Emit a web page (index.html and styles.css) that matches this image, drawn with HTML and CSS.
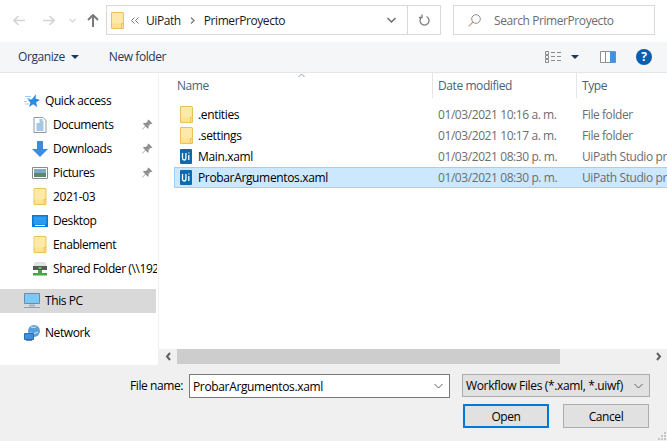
FILE: index.html
```html
<!DOCTYPE html>
<html lang="en">
<head>
    <meta charset="UTF-8">
    <title>Open</title>
    <link rel="stylesheet" href="styles.css">
</head>
<body>
    <svg class="defs" width="0" height="0">
        <symbol id="folder" viewBox="0 0 13 17">
            <path d="M.5.5h11.6l.4.5v15.5H.5z" fill="#fee28f" stroke="#e9c355"/>
            <path d="M1 1h10.6v10.5H1z" fill="#fee9a9"/>
            <path d="M10.5 16.5v-5h2" fill="none" stroke="#e9c355"/>
        </symbol>
        <symbol id="uipath" viewBox="0 0 12 15">
            <path d="M1 0h10a1 1 0 0 1 1 1v13a1 1 0 0 1-1 1H1a1 1 0 0 1-1-1V1a1 1 0 0 1 1-1z" fill="#0a6ab4"/>
            <path d="M2.5 4v5.2q0 1.8 1.7 1.8t1.7-1.8V4M8.8 6v5M8.8 3.6v1" fill="none" stroke="#fff" stroke-width="1.3"/>
        </symbol>
        <symbol id="pin" viewBox="0 0 11 11">
            <path d="M6.5.5l4 4-1.2.6-.8-.2-2 2 .2 2-.9.8-2.3-2.3L.6 10.4l-.4-.4 3-3.1L1 4.700l.8-.9 2 .2 2-2-.2-.8z" fill="#8f9295"/>
        </symbol>
    </svg>

    <div class="dialog">
        <div class="navbar">
            <div class="nav-buttons">
                <svg class="nav-back" width="12" height="11" viewBox="0 0 12 11"><path d="M5.500 1L1 5.500 5.500 10M1 5.500h11" fill="none" stroke="#d4d4d4" stroke-width="1.600"/></svg>
                <svg class="nav-forward" width="12" height="11" viewBox="0 0 12 11"><path d="M6.500 1L11 5.500 6.500 10M11 5.500H0" fill="none" stroke="#d4d4d4" stroke-width="1.600"/></svg>
                <svg class="nav-recent" width="7" height="5" viewBox="0 0 7 5"><path d="M.5 1l3 3 3-3" fill="none" stroke="#d4d4d4" stroke-width="1.200"/></svg>
                <svg class="nav-up" width="12" height="13" viewBox="0 0 12 13"><path d="M1 6l5-5 5 5M6 1v12" fill="none" stroke="#7a7a7a" stroke-width="2"/></svg>
            </div>
            <div class="address">
                <svg class="address-folder" width="13" height="17"><use href="#folder"/></svg>
                <svg class="crumb-more" width="8" height="7" viewBox="0 0 8 7"><path d="M3.500.5l-3 3 3 3M7.500.5l-3 3 3 3" fill="none" stroke="#7d7d7d"/></svg>
                <span class="crumb">UiPath</span>
                <svg class="crumb-sep" width="5" height="7" viewBox="0 0 5 7"><path d="M1 .5l3 3-3 3" fill="none" stroke="#7d7d7d" stroke-width="1.300"/></svg>
                <span class="crumb">PrimerProyecto</span>
                <svg class="address-drop" width="9" height="6" viewBox="0 0 9 6"><path d="M.5 1l4 4 4-4" fill="none" stroke="#6d6d6d" stroke-width="1.500"/></svg>
                <div class="address-refresh">
                    <svg width="11" height="12" viewBox="0 0 11 12"><path d="M3.500 2.500a4.500 4.500 0 1 0 4 0M3 .5v3H0" fill="none" stroke="#7d7d7d" stroke-width="1.300"/></svg>
                </div>
            </div>
            <div class="search">
                <svg width="13" height="13" viewBox="0 0 13 13"><circle cx="8" cy="5" r="4.300" fill="none" stroke="#8d8d8d"/><path d="M5 8L.7 12.300" stroke="#c59a82" stroke-width="1.100"/></svg>
                <span>Search PrimerProyecto</span>
            </div>
        </div>

        <div class="toolbar">
            <span class="tool">Organize</span>
            <span class="caret"></span>
            <span class="tool new-folder">New folder</span>
            <div class="toolbar-right">
                <svg width="17" height="12" viewBox="0 0 17 12"><path d="M.5.500h3v3h-3zM.5 4.500h3v3h-3zM.5 8.500h3v3h-3z" fill="none" stroke="#8b8b8b"/><path d="M6 1.500h4M12 1.500h4M6 5.500h4M12 5.500h4M6 9.500h4M12 9.500h4" stroke="#8b8b8b"/></svg>
                <span class="caret caret-view"></span>
                <svg class="pane-icon" width="16" height="12" viewBox="0 0 16 12"><path d="M.5.500h15v11H.5z" fill="#fff" stroke="#8f8f8f"/><path d="M5.500 1v10" stroke="#8f8f8f"/><path d="M10 1h5.500v10.500H10z" fill="#4191dc"/></svg>
                <span class="help">?</span>
            </div>
        </div>

        <div class="main">
            <nav class="sidebar">
                <div class="side-item side-top">
                    <svg width="16" height="14" viewBox="0 0 16 14"><path d="M12 0l-.4 4.600L16 6l-3.800 2.300.8 5-3.800-3L5 13l1.400-4.600L3.500 5.500 8 5.200z" fill="#2c8be0"/><path d="M1 2.500h6M3 4.500h3M0 7.500h3M1 10h4" stroke="#9dcdf3"/></svg>
                    <span>Quick access</span>
                </div>
                <div class="side-item">
                    <svg width="13" height="16" viewBox="0 0 13 16"><path d="M.5.500h9l3 3v12H.5z" fill="#fff" stroke="#8e9aa5"/><path d="M6 3h3M6 5h4M3 7h7M3 9h7M3 11h7M3 13h7" stroke="#4a8fc7"/></svg>
                    <span>Documents</span>
                    <svg class="pin" width="11" height="11"><use href="#pin"/></svg>
                </div>
                <div class="side-item">
                    <svg width="16" height="16" viewBox="0 0 16 16"><path d="M5 0h6v8h5l-8 8-8-8h5z" fill="#3a8ddd"/></svg>
                    <span>Downloads</span>
                    <svg class="pin" width="11" height="11"><use href="#pin"/></svg>
                </div>
                <div class="side-item">
                    <svg width="16" height="12" viewBox="0 0 16 12"><path d="M.5.500h15v11H.5z" fill="#fff" stroke="#8b8b8b"/><path d="M2 2h12v4H2z" fill="#7fa9cf"/><path d="M2 6h12v4H2z" fill="#5c8a68"/></svg>
                    <span>Pictures</span>
                    <svg class="pin" width="11" height="11"><use href="#pin"/></svg>
                </div>
                <div class="side-item">
                    <svg width="13" height="17"><use href="#folder"/></svg>
                    <span>2021-03</span>
                </div>
                <div class="side-item">
                    <svg width="16" height="12" viewBox="0 0 16 12"><path d="M0 0h16v12H0z" fill="#0a78d7"/><path d="M1.500 1.500h13v8h-13z" fill="#2b9cf0"/><path d="M3 10.500h10" stroke="#fff"/></svg>
                    <span>Desktop</span>
                </div>
                <div class="side-item">
                    <svg width="13" height="17"><use href="#folder"/></svg>
                    <span>Enablement</span>
                </div>
                <div class="side-item">
                    <svg width="16" height="14" viewBox="0 0 16 14"><path d="M3 0h10l2 4H1z" fill="#e2e2e2"/><path d="M1 4h14v4H1z" fill="#5a5a5a"/><path d="M6.500 5h3v2h-3z" fill="#58c858"/><path d="M6 8h4v3h5v2.500H1V11h5z" fill="#46a546"/></svg>
                    <span class="clip">Shared Folder (\\192.168.1.10)</span>
                </div>
                <div class="side-item side-top side-selected">
                    <svg width="16" height="15" viewBox="0 0 16 15"><path d="M.5.500h15v10H.5z" fill="#7cc8f5" stroke="#6b8aa6"/><path d="M5 12.500h6" stroke="#a2b3c2" stroke-width="2"/><path d="M0 14.500h16" stroke="#8aa0b5"/></svg>
                    <span>This PC</span>
                </div>
                <div class="side-item side-top side-network">
                    <svg width="16" height="16" viewBox="0 0 16 16"><circle cx="10" cy="6" r="6" fill="#5d9fd8"/><path d="M7 2q3 1 5 0M6 8q4 2 8-1" stroke="#d6e9f7" fill="none"/><path d="M.5 8.500h9v6h-9z" fill="#3d8fdc" stroke="#2a6fb4"/><path d="M2 15.500h6" stroke="#6b8aa6"/></svg>
                    <span>Network</span>
                </div>
            </nav>

            <div class="content">
                <div class="columns">
                    <div class="col col-name">Name<svg class="sort" width="7" height="5" viewBox="0 0 7 5"><path d="M.5 4L3.500 1l3 3" fill="none" stroke="#8f9aa5"/></svg></div>
                    <div class="col col-date">Date modified</div>
                    <div class="col col-type">Type</div>
                </div>
                <div class="rows">
                    <div class="row">
                        <div class="cell-name"><svg width="13" height="17"><use href="#folder"/></svg><span>.entities</span></div>
                        <div class="cell-date">01/03/2021 10:16 a. m.</div>
                        <div class="cell-type">File folder</div>
                    </div>
                    <div class="row">
                        <div class="cell-name"><svg width="13" height="17"><use href="#folder"/></svg><span>.settings</span></div>
                        <div class="cell-date">01/03/2021 10:17 a. m.</div>
                        <div class="cell-type">File folder</div>
                    </div>
                    <div class="row">
                        <div class="cell-name"><svg class="ui-icon" width="12" height="15"><use href="#uipath"/></svg><span>Main.xaml</span></div>
                        <div class="cell-date">01/03/2021 08:30 p. m.</div>
                        <div class="cell-type">UiPath Studio project file</div>
                    </div>
                    <div class="row row-selected">
                        <div class="cell-name"><svg class="ui-icon" width="12" height="15"><use href="#uipath"/></svg><span>ProbarArgumentos.xaml</span></div>
                        <div class="cell-date">01/03/2021 08:30 p. m.</div>
                        <div class="cell-type">UiPath Studio project file</div>
                    </div>
                </div>
                <div class="hscroll">
                    <svg width="17" height="15" viewBox="0 0 17 15"><path d="M10 4L7 7.500l3 3.500" fill="none" stroke="#606060" stroke-width="2"/></svg>
                    <div class="hscroll-track"><div class="hscroll-thumb"></div></div>
                    <svg width="17" height="15" viewBox="0 0 17 15"><path d="M7 4l3 3.500L7 11" fill="none" stroke="#606060" stroke-width="2"/></svg>
                </div>
            </div>
        </div>

        <div class="footer">
            <div class="file-row">
                <label class="file-label">File name:</label>
                <div class="file-input">
                    <span>ProbarArgumentos.xaml</span>
                    <svg width="9" height="6" viewBox="0 0 9 6"><path d="M.5 1l4 4 4-4" fill="none" stroke="#606060"/></svg>
                </div>
                <div class="file-filter">
                    <span>Workflow Files (*.xaml, *.uiwf)</span>
                    <svg width="9" height="6" viewBox="0 0 9 6"><path d="M.5 1l4 4 4-4" fill="none" stroke="#606060"/></svg>
                </div>
            </div>
            <div class="button-row">
                <button class="btn btn-default">Open</button>
                <button class="btn">Cancel</button>
            </div>
            <svg class="grip" width="8" height="8" viewBox="0 0 8 8"><path d="M6 0h2v2H6zM3 3h2v2H3zM6 3h2v2H6zM0 6h2v2H0zM3 6h2v2H3zM6 6h2v2H6z" fill="#c4c4c4"/></svg>
        </div>
    </div>
</body>
</html>
```

FILE: styles.css
```css
* {
    box-sizing: border-box;
}
html, body {
    margin: 0;
    padding: 0;
    overflow: hidden;
}
body {
    font-family: "Open Sans", "Noto Sans", sans-serif;
    font-size: 12px;
    letter-spacing: -0.42px;
    color: #000;
    background-color: #fff;
}
.defs {
    display: block;
    height: 0;
}
svg {
    flex: none;
    display: block;
}
.dialog {
    width: 667px;
    height: 441px;
    display: flex;
    flex-direction: column;
}

/* top bar */
.navbar {
    height: 42px;
    flex: none;
    display: flex;
    padding-top: 5px;
    padding-bottom: 7px;
}
.nav-buttons {
    width: 106px;
    flex: none;
    display: flex;
    align-items: center;
    padding-left: 13px;
}
.nav-forward {
    margin-left: 18px;
}
.nav-recent {
    margin-left: 14px;
}
.nav-up {
    margin-left: 11px;
}
.address {
    width: 335px;
    flex: none;
    display: flex;
    align-items: center;
    border: 1px solid #d9d9d9;
    padding-left: 4px;
    color: #1a1a1a;
}
.crumb-more {
    margin-left: 7px;
    margin-right: 7px;
}
.crumb-sep {
    margin: 0 9px;
}
.address-drop {
    margin-left: auto;
    margin-right: 11px;
}
.address-refresh {
    width: 33px;
    align-self: stretch;
    display: flex;
    align-items: center;
    justify-content: center;
    border-left: 1px solid #d9d9d9;
}
.search {
    width: 202px;
    flex: none;
    margin-left: 12px;
    display: flex;
    align-items: center;
    border: 1px solid #d9d9d9;
    padding-left: 14px;
    color: #6d6d6d;
}
.search span {
    margin-left: 13px;
}

/* toolbar */
.toolbar {
    height: 31px;
    flex: none;
    display: flex;
    align-items: center;
    padding-left: 18px;
    padding-bottom: 1px;
    background-color: #f5f6f7;
    border-bottom: 1px solid #e6e7e8;
    color: #1e395b;
}
.caret {
    width: 0;
    height: 0;
    margin-left: 6px;
    border-left: 4px solid transparent;
    border-right: 4px solid transparent;
    border-top: 4px solid #1e395b;
}
.new-folder {
    margin-left: 30px;
}
.toolbar-right {
    margin-left: auto;
    display: flex;
    align-items: center;
    padding-right: 15px;
}
.caret-view {
    margin-left: 9px;
}
.pane-icon {
    margin-left: 21px;
}
.help {
    width: 16px;
    height: 16px;
    margin-left: 20px;
    border-radius: 50%;
    background-color: #0a5eb0;
    color: #fff;
    font-weight: 700;
    font-size: 12px;
    line-height: 16px;
    text-align: center;
    letter-spacing: 0;
}

/* sidebar */
.main {
    flex: 1;
    display: flex;
    min-height: 0;
}
.sidebar {
    width: 159px;
    flex: none;
    border-right: 1px solid #f0f0f0;
    padding-top: 16px;
}
.side-item {
    height: 24px;
    display: flex;
    align-items: center;
    padding-left: 32px;
    padding-bottom: 1px;
    white-space: nowrap;
    overflow: hidden;
}
.side-item svg:first-child {
    width: 16px;
    margin-right: 5px;
}
.side-top {
    padding-left: 24px;
}
.side-selected {
    margin-top: 8px;
    margin-right: 2px;
    background-color: #d9d9d9;
}
.side-network {
    margin-top: 8px;
}
.pin {
    margin-left: auto;
    margin-right: 5px;
}
.clip {
    overflow: hidden;
    width: 104px;
}

/* file list */
.content {
    flex: 1;
    min-width: 0;
    display: flex;
    flex-direction: column;
    overflow: hidden;
}
.columns {
    height: 25px;
    flex: none;
    display: flex;
    color: #4c607a;
}
.col {
    flex: none;
    display: flex;
    align-items: center;
    padding-left: 5px;
    border-right: 1px solid #e5e5e5;
    position: relative;
}
.col-name {
    width: 274px;
    padding-left: 18px;
}
.col-date {
    width: 144px;
}
.col-type {
    flex: 1;
    border-right: none;
}
.sort {
    position: absolute;
    left: 139px;
    top: 0;
}
.rows {
    flex: 1;
    padding-top: 6px;
    padding-left: 15px;
}
.row {
    height: 21px;
    display: flex;
    align-items: center;
    white-space: nowrap;
    border: 1px solid transparent;
    border-right: none;
    color: #6d6d6d;
}
.row-selected {
    background-color: #cce8ff;
    border-color: #99d1ff;
}
.cell-name {
    width: 258px;
    flex: none;
    display: flex;
    align-items: center;
    padding-left: 5px;
    color: #000;
    letter-spacing: -0.35px;
}
.cell-name svg {
    margin-right: 5px;
}
.cell-name .ui-icon {
    margin-right: 6px;
}
.cell-date {
    width: 144px;
    flex: none;
    padding-left: 5px;
}
.cell-type {
    padding-left: 5px;
}
.hscroll {
    height: 16px;
    flex: none;
    display: flex;
    background-color: #f0f0f0;
    padding-left: 1px;
    padding-bottom: 1px;
}
.hscroll-track {
    flex: 1;
}
.hscroll-thumb {
    width: 383px;
    height: 100%;
    background-color: #cdcdcd;
}

/* bottom panel */
.footer {
    height: 76px;
    flex: none;
    position: relative;
    background-color: #f0f0f0;
    padding-top: 9px;
}
.file-row {
    display: flex;
    height: 24px;
}
.file-label {
    width: 189px;
    flex: none;
    padding-right: 6px;
    text-align: right;
    line-height: 24px;
}
.file-input {
    width: 261px;
    flex: none;
    display: flex;
    align-items: center;
    justify-content: space-between;
    padding: 0 6px 0 3px;
    background-color: #fff;
    border: 1px solid #7a7a7a;
    letter-spacing: -0.35px;
}
.file-filter {
    width: 188px;
    flex: none;
    margin-left: 12px;
    height: 23px;
    display: flex;
    align-items: center;
    justify-content: space-between;
    padding: 0 6px 0 3px;
    background-color: #e1e1e1;
    border: 1px solid #adadad;
    letter-spacing: -0.35px;
}
.button-row {
    display: flex;
    gap: 14px;
    margin-top: 6px;
    padding-left: 463px;
}
.btn {
    width: 86px;
    height: 24px;
    padding: 0;
    font: inherit;
    letter-spacing: inherit;
    color: #000;
    background-color: #e1e1e1;
    border: 1px solid #adadad;
}
.btn-default {
    border: 2px solid #0078d7;
}
.grip {
    position: absolute;
    right: 1px;
    bottom: 1px;
}
```
